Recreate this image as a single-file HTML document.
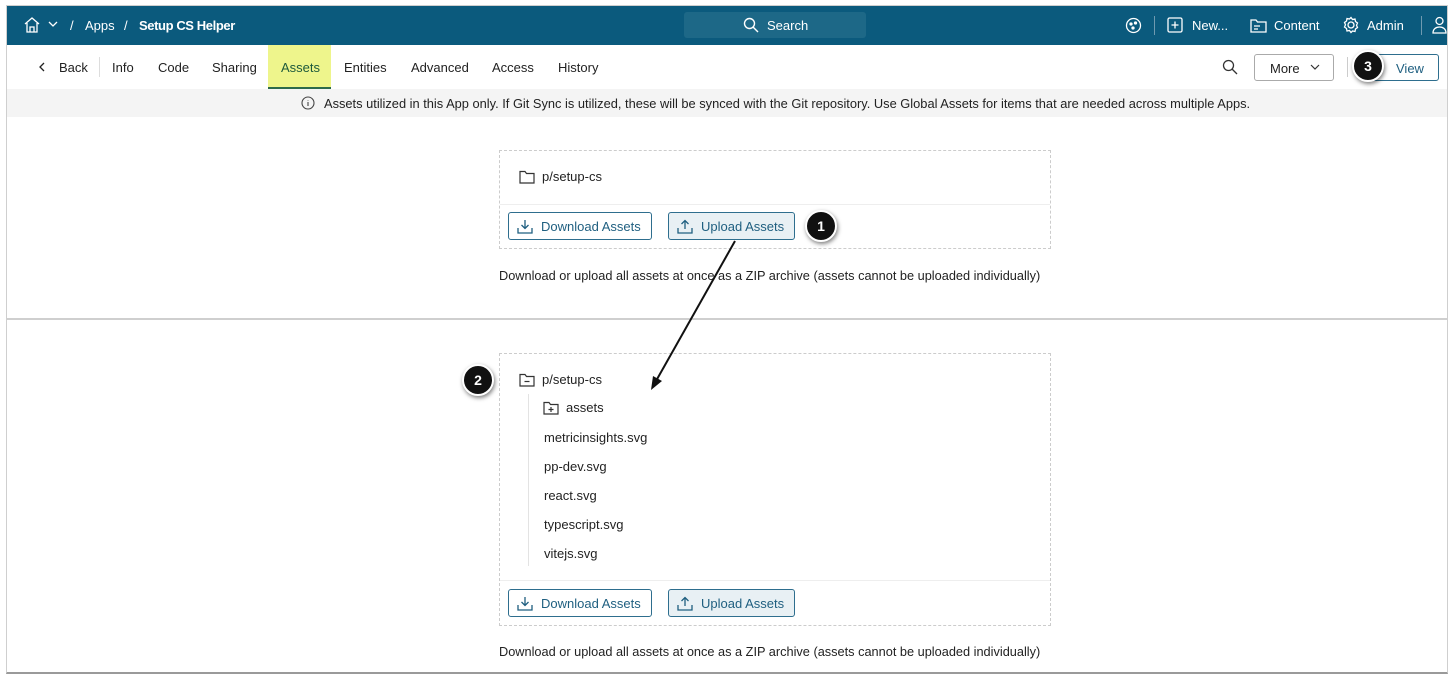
<!DOCTYPE html>
<html><head><meta charset="utf-8"><style>
*{box-sizing:border-box;margin:0;padding:0}
body{width:1454px;height:677px;background:#fff;font-family:"Liberation Sans",sans-serif;position:relative;overflow:hidden;color:#222}
.a{position:absolute}
.frame{left:6px;top:5px;width:1442px;height:669px;border:1px solid #cfcfcf;border-bottom:2px solid #9a9a9a;border-right:1px solid #cfcfcf}
.hdr{left:7px;top:6px;width:1440px;height:39px;background:#0b5a7d;color:#fff;font-size:13px}
.hdr .t{position:absolute;top:12px}
.tab{position:absolute;top:60px;font-size:13px;color:#222}
.btn{position:absolute;height:28px;border:1px solid #2e6e8e;border-radius:3px;font-size:13px;color:#1f5f80;display:flex;align-items:center;padding-left:8px}
.btn svg{margin-right:8px}
.box{border:1px dashed #ccc;position:absolute;left:499px;width:552px}
.badge{position:absolute;width:32px;height:32px;border-radius:50%;background:#111;color:#fff;font-weight:bold;font-size:14px;display:flex;align-items:center;justify-content:center;border:2px solid #fff;box-shadow:1px 2px 4px rgba(0,0,0,.5)}
.f{position:absolute;left:544px;font-size:13px;color:#222}
.note{position:absolute;left:499px;font-size:12.75px;color:#222}
</style></head><body>
<div class="a frame"></div>
<div class="a hdr">
  <svg class="a" style="left:16px;top:10px" width="18" height="18" viewBox="0 0 18 18" fill="none" stroke="#fff" stroke-width="1.3"><path d="M2 8L9 2l7 6M4 7v9h10V7M7 16v-5h4v5"/></svg>
  <svg class="a" style="left:41px;top:15px" width="10" height="7" viewBox="0 0 10 7" fill="none" stroke="#fff" stroke-width="1.3"><path d="M1 1l4 4 4-4"/></svg>
  <span class="t" style="left:63px">/</span><span class="t" style="left:78px">Apps</span><span class="t" style="left:117px">/</span><span class="t" style="left:132px;font-weight:bold;letter-spacing:-0.4px">Setup CS Helper</span>
  <div class="a" style="left:677px;top:6px;width:182px;height:26px;background:#1d6887;border-radius:3px"></div>
  <svg class="a" style="left:736px;top:11px" width="16" height="16" viewBox="0 0 16 16" fill="none" stroke="#fff" stroke-width="1.4"><circle cx="6.5" cy="6.5" r="5"/><path d="M10 10l5 5"/></svg>
  <span class="t" style="left:760px">Search</span>
  <svg class="a" style="left:1118px;top:11px" width="17" height="17" viewBox="0 0 17 17" fill="none" stroke="#fff" stroke-width="1.3"><circle cx="8.5" cy="8.5" r="7"/><circle cx="6" cy="7" r="1" fill="#fff"/><circle cx="10.5" cy="6" r="1" fill="#fff"/><circle cx="8" cy="11" r="1" fill="#fff"/></svg>
  <div class="a" style="left:1147px;top:10px;width:1px;height:19px;background:#6f9ab0"></div>
  <svg class="a" style="left:1160px;top:11px" width="16" height="16" viewBox="0 0 16 16" fill="none" stroke="#fff" stroke-width="1.3"><rect x="1" y="1" width="14" height="14" rx="1.5"/><path d="M8 4.5v7M4.5 8h7"/></svg>
  <span class="t" style="left:1185px">New...</span>
  <svg class="a" style="left:1243px;top:11px" width="17" height="16" viewBox="0 0 17 16" fill="none" stroke="#fff" stroke-width="1.3"><path d="M1 3h5l1.5 2H16v10H1z"/><path d="M4 9h6M4 12h4"/></svg>
  <span class="t" style="left:1267px">Content</span>
  <svg class="a" style="left:1335px;top:10px" width="18" height="18" viewBox="0 0 18 18" fill="none" stroke="#fff" stroke-width="1.3"><circle cx="9" cy="9" r="3"/><path d="M9 1.5l1.5 2 2.5-.5.5 2.5 2 1.5-1 2.3 1 2.2-2 1.5-.5 2.5-2.5-.5L9 16.5l-1.5-2-2.5.5-.5-2.5-2-1.5 1-2.2-1-2.3 2-1.5.5-2.5 2.5.5z"/></svg>
  <span class="t" style="left:1360px">Admin</span>
  <div class="a" style="left:1414px;top:10px;width:1px;height:19px;background:#6f9ab0"></div>
  <svg class="a" style="left:1425px;top:10px" width="15" height="18" viewBox="0 0 15 18" fill="none" stroke="#fff" stroke-width="1.3"><circle cx="7.5" cy="5" r="3.5"/><path d="M1 17c0-4 3-6 6.5-6s6.5 2 6.5 6z"/></svg>
</div>
<div class="a" style="left:268px;top:45px;width:63px;height:44px;background:#eef58c;border-bottom:2px solid #2c6a4a"></div>
<svg class="a" style="left:38px;top:62px" width="8" height="10" viewBox="0 0 8 10" fill="none" stroke="#222" stroke-width="1.3"><path d="M6 1L2 5l4 4"/></svg>
<span class="tab" style="left:59px">Back</span>
<div class="a" style="left:99px;top:57px;width:1px;height:20px;background:#ddd"></div>
<span class="tab" style="left:112px">Info</span>
<span class="tab" style="left:158px">Code</span>
<span class="tab" style="left:212px">Sharing</span>
<span class="tab" style="left:281px;color:#1e5a3c">Assets</span>
<span class="tab" style="left:344px">Entities</span>
<span class="tab" style="left:411px">Advanced</span>
<span class="tab" style="left:492px">Access</span>
<span class="tab" style="left:558px">History</span>
<svg class="a" style="left:1222px;top:59px" width="16" height="16" viewBox="0 0 16 16" fill="none" stroke="#333" stroke-width="1.3"><circle cx="6.5" cy="6.5" r="5"/><path d="M10 10l5 5"/></svg>
<div class="a" style="left:1254px;top:54px;width:80px;height:27px;border:1px solid #aaa;border-radius:3px;font-size:13px;padding:6px 0 0 15px">More</div>
<svg class="a" style="left:1310px;top:64px" width="10" height="7" viewBox="0 0 10 7" fill="none" stroke="#333" stroke-width="1.2"><path d="M1 1l4 4 4-4"/></svg>
<div class="a" style="left:1347px;top:57px;width:1px;height:20px;background:#ccc"></div>
<div class="a" style="left:1364px;top:54px;width:75px;height:27px;border:1px solid #2e6e8e;border-radius:3px;font-size:13px;color:#1f5f80;padding:6px 0 0 31px">View</div>
<div class="badge" style="left:1352px;top:50px">3</div>
<div class="a" style="left:7px;top:89px;width:1440px;height:28px;background:#f4f4f4"></div>
<svg class="a" style="left:301px;top:96px" width="14" height="14" viewBox="0 0 14 14" fill="none" stroke="#444" stroke-width="1.1"><circle cx="7" cy="7" r="6"/><path d="M7 6v4M7 4v.5"/></svg>
<span class="a" style="left:324px;top:96px;font-size:12.85px;color:#222">Assets utilized in this App only. If Git Sync is utilized, these will be synced with the Git repository. Use Global Assets for items that are needed across multiple Apps.</span>
<div class="box" style="top:150px;height:99px"></div>
<div class="a" style="left:500px;top:204px;width:550px;height:1px;background:#eee"></div>
<svg class="a" style="left:519px;top:170px" width="16" height="14" viewBox="0 0 16 14" fill="none" stroke="#333" stroke-width="1.2"><path d="M1 1.5h5l1.5 2H15v9.5H1z"/></svg>
<span class="a" style="left:542px;top:169px;font-size:13px">p/setup-cs</span>
<div class="btn" style="left:508px;top:212px;width:144px"><svg width="16" height="15" viewBox="0 0 16 15" fill="none" stroke="#1f5f80" stroke-width="1.3"><path d="M8 1v8M4.5 6L8 9.5 11.5 6M1 9v5h14V9"/></svg>Download Assets</div>
<div class="btn" style="left:668px;top:212px;width:127px;background:#e8f0f4"><svg width="16" height="15" viewBox="0 0 16 15" fill="none" stroke="#1f5f80" stroke-width="1.3"><path d="M8 10V1.5M4.5 5L8 1.5 11.5 5M1 9v5h14V9"/></svg>Upload Assets</div>
<div class="badge" style="left:805px;top:210px">1</div>
<span class="note" style="top:268px">Download or upload all assets at once as a ZIP archive (assets cannot be uploaded individually)</span>
<div class="a" style="left:7px;top:318px;width:1440px;height:2px;background:#cfcfcf"></div>
<div class="box" style="top:353px;height:273px"></div>
<div class="a" style="left:500px;top:580px;width:550px;height:1px;background:#eee"></div>
<svg class="a" style="left:519px;top:373px" width="16" height="14" viewBox="0 0 16 14" fill="none" stroke="#333" stroke-width="1.2"><path d="M1 1.5h5l1.5 2H15v9.5H1z"/><path d="M5.5 8.5h5"/></svg>
<span class="a" style="left:542px;top:372px;font-size:13px">p/setup-cs</span>
<div class="a" style="left:528px;top:394px;width:1px;height:172px;background:#e3e3e3"></div>
<svg class="a" style="left:543px;top:401px" width="16" height="14" viewBox="0 0 16 14" fill="none" stroke="#333" stroke-width="1.2"><path d="M1 1.5h5l1.5 2H15v9.5H1z"/><path d="M5.5 8.5h5M8 6v5"/></svg>
<span class="f" style="left:566px;top:400px">assets</span>
<span class="f" style="top:430px">metricinsights.svg</span>
<span class="f" style="top:459px">pp-dev.svg</span>
<span class="f" style="top:488px">react.svg</span>
<span class="f" style="top:517px">typescript.svg</span>
<span class="f" style="top:546px">vitejs.svg</span>
<div class="btn" style="left:508px;top:589px;width:144px"><svg width="16" height="15" viewBox="0 0 16 15" fill="none" stroke="#1f5f80" stroke-width="1.3"><path d="M8 1v8M4.5 6L8 9.5 11.5 6M1 9v5h14V9"/></svg>Download Assets</div>
<div class="btn" style="left:668px;top:589px;width:127px;background:#e8f0f4"><svg width="16" height="15" viewBox="0 0 16 15" fill="none" stroke="#1f5f80" stroke-width="1.3"><path d="M8 10V1.5M4.5 5L8 1.5 11.5 5M1 9v5h14V9"/></svg>Upload Assets</div>
<div class="badge" style="left:462px;top:364px">2</div>
<span class="note" style="top:644px">Download or upload all assets at once as a ZIP archive (assets cannot be uploaded individually)</span>
<svg class="a" style="left:0;top:0" width="1454" height="677"><path d="M735 241L656 381" stroke="#111" stroke-width="2" fill="none"/><path d="M651 390l2-14 9 5z" fill="#111"/></svg>
</body></html>
